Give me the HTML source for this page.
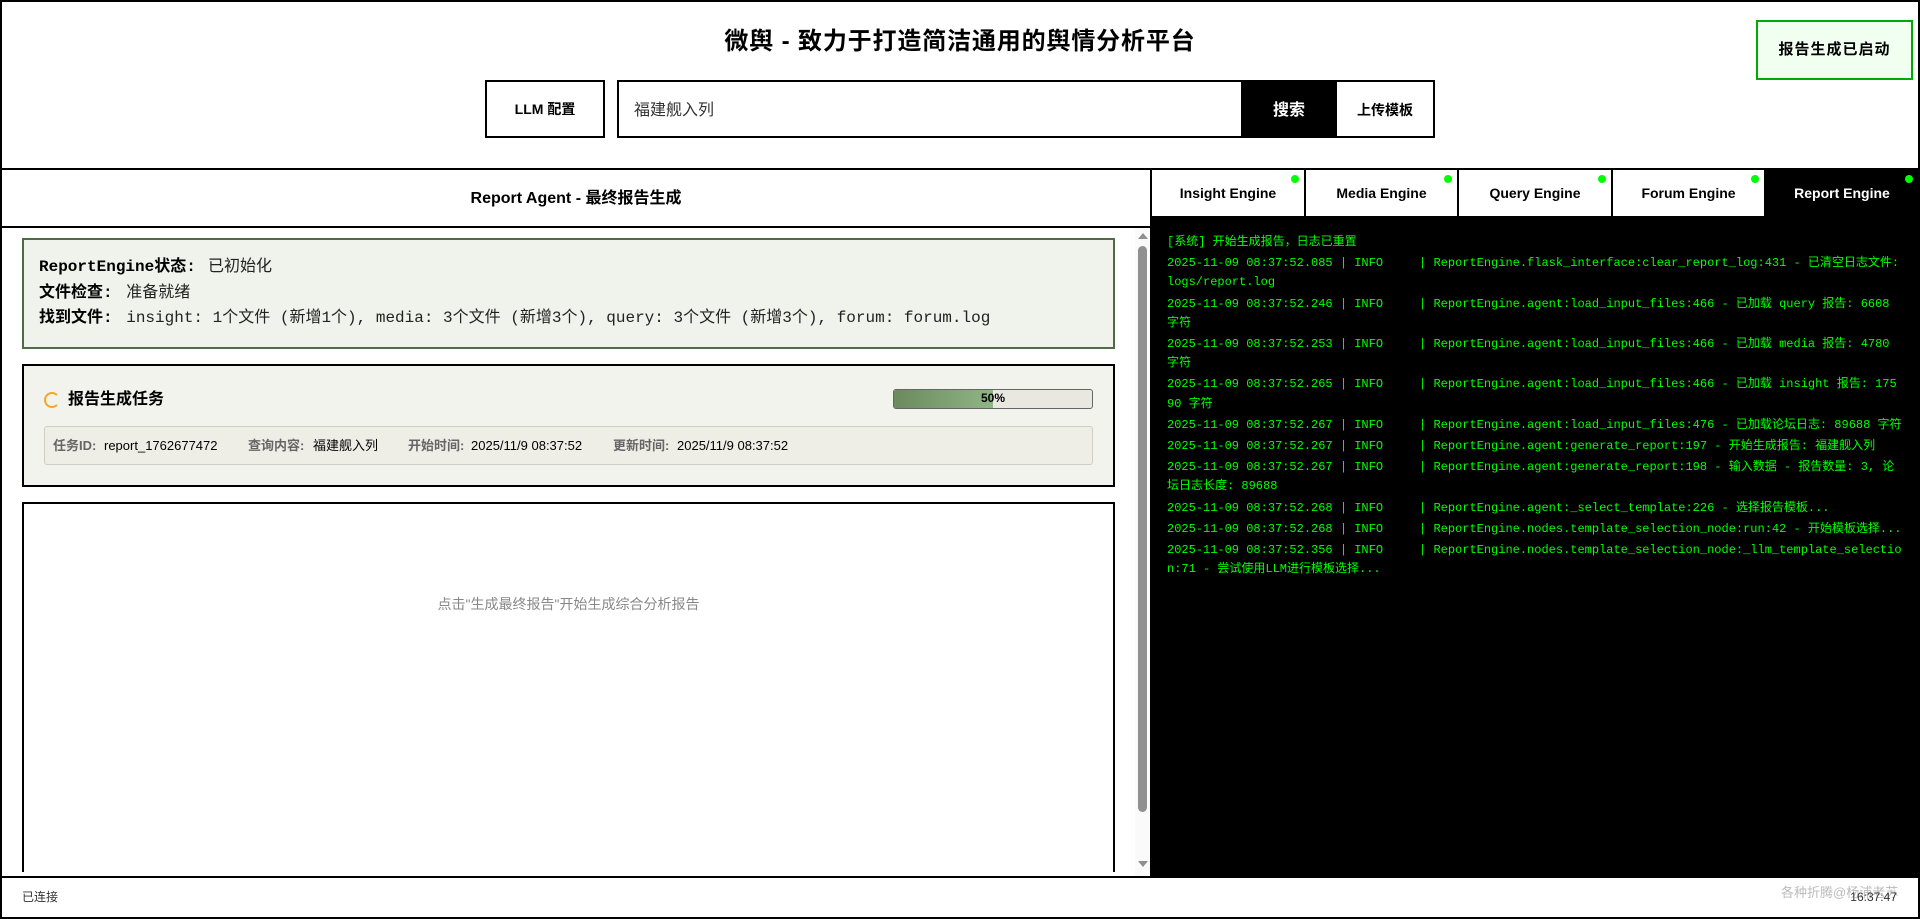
<!DOCTYPE html>
<html lang="zh-CN">
<head>
<meta charset="utf-8">
<title>微舆</title>
<style>
html,body{margin:0;padding:0;width:1920px;height:919px;overflow:hidden;background:#fff;color:#000;font-family:"Liberation Sans","Noto Sans CJK SC",sans-serif}
*{box-sizing:border-box}
.a{position:absolute;white-space:pre}
.b{position:absolute}
.c{text-align:center}
.mono{font-family:"Liberation Mono","Noto Sans CJK SC",monospace}
.tab{position:absolute;top:170px;height:46px;line-height:46px;text-align:center;font-size:14px;font-weight:bold;background:#fff;border-right:2px solid #000}
.tab i{position:absolute;top:5px;right:5px;width:8px;height:8px;border-radius:50%;background:#0f0}
.lab{position:absolute;top:426px;line-height:39px;font-size:13px;font-weight:bold;color:#666;white-space:pre}
.val{position:absolute;top:426px;line-height:39px;font-size:13px;color:#000;white-space:pre}
#log{position:absolute;left:1167px;top:233px;font:12px/19.2px "Liberation Mono","Noto Sans CJK SC",monospace;color:#0f0;white-space:pre}
#log div{margin-bottom:2px}
.v{color:#222}
</style>
</head>
<body>
<!-- frame -->
<div class="b" style="left:0;top:0;width:1920px;height:919px;border:2px solid #000"></div>

<!-- header -->
<div class="a c" style="left:0;top:24px;width:1920px;line-height:36px;font-size:24px;font-weight:bold;letter-spacing:.85px">微舆 - 致力于打造简洁通用的舆情分析平台</div>
<div class="a c" style="left:485px;top:80px;width:120px;height:58px;border:2px solid #000;line-height:55px;font-size:14px;font-weight:bold">LLM 配置</div>
<div class="b" style="left:617px;top:80px;width:818px;height:58px;border:2px solid #000"></div>
<div class="a" style="left:634px;top:84px;line-height:54px;font-size:16px;color:#333">福建舰入列</div>
<div class="a c" style="left:1241px;top:82px;width:96px;height:56px;background:#000;color:#fff;line-height:57px;font-size:16px;font-weight:bold">搜索</div>
<div class="b" style="left:1241px;top:80px;width:96px;height:2px;background:#000"></div>
<div class="a c" style="left:1337px;top:83px;width:96px;line-height:54px;font-size:14px;font-weight:bold">上传模板</div>
<div class="a c" style="left:1756px;top:20px;width:157px;height:60px;border:2px solid #00aa00;background:#f0fff0;line-height:56px;font-size:15px;font-weight:bold;letter-spacing:1px">报告生成已启动</div>
<div class="b" style="left:0;top:168px;width:1920px;height:2px;background:#000"></div>

<!-- left panel -->
<div class="a c" style="left:2px;top:171px;width:1148px;line-height:56px;font-size:16px;font-weight:bold">Report Agent - 最终报告生成</div>
<div class="b" style="left:0;top:226px;width:1150px;height:2px;background:#000"></div>

<!-- status box -->
<div class="b" style="left:22px;top:238px;width:1093px;height:111px;background:#eff3ec;border:2px solid #506b46"></div>
<div class="a mono" style="left:39px;top:255px;font-size:16px;line-height:25.6px;color:#000"><b>ReportEngine状态: </b><span class="v" style="margin-left:2.5px">已初始化</span>
<b>文件检查: </b><span class="v" style="margin-left:4px">准备就绪</span>
<b>找到文件: </b><span class="v" style="margin-left:4px">insight: 1个文件 (新增1个), media: 3个文件 (新增3个), query: 3个文件 (新增3个), forum: forum.log</span></div>

<!-- task box -->
<div class="b" style="left:22px;top:364px;width:1093px;height:123px;background:#f3f3ed;border:2px solid #000"></div>
<div class="b" style="left:44px;top:392px;width:16px;height:16px;border-radius:50%;border:2px solid #f5a623;border-right-color:transparent"></div>
<div class="a" style="left:68px;top:388px;line-height:24px;font-size:16px;font-weight:bold">报告生成任务</div>
<div class="b" style="left:893px;top:389px;width:200px;height:20px;border:1px solid #666;border-radius:3px;background:#e8e7e0;overflow:hidden">
  <div class="b" style="left:0;top:0;width:99px;height:18px;background:linear-gradient(90deg,#6b8a5e,#8fb585)"></div>
  <div class="a c" style="left:0;top:0;width:198px;line-height:17px;font-size:12px;font-weight:bold">50%</div>
</div>
<div class="b" style="left:44px;top:426px;width:1049px;height:39px;border:1px solid #cfcec3;border-radius:3px;background:#eeede6"></div>
<div class="lab" style="left:53px">任务ID:</div><div class="val" style="left:104px">report_1762677472</div>
<div class="lab" style="left:248px">查询内容:</div><div class="val" style="left:313px">福建舰入列</div>
<div class="lab" style="left:408px">开始时间:</div><div class="val" style="left:471px">2025/11/9 08:37:52</div>
<div class="lab" style="left:613px">更新时间:</div><div class="val" style="left:677px">2025/11/9 08:37:52</div>

<!-- report box -->
<div class="b" style="left:22px;top:502px;width:1093px;height:370px;border:2px solid #000;border-bottom:0"></div>
<div class="a c" style="left:24px;top:594px;width:1089px;line-height:20px;font-size:14px;color:#888">点击"生成最终报告"开始生成综合分析报告</div>

<!-- scrollbar -->
<div class="b" style="left:1135px;top:228px;width:15px;height:648px;background:#fafafa"></div>
<div class="b" style="left:1138px;top:233px;width:0;height:0;border-left:5px solid transparent;border-right:5px solid transparent;border-bottom:6px solid #909090"></div>
<div class="b" style="left:1138px;top:246px;width:9px;height:566px;border-radius:5px;background:#909090"></div>
<div class="b" style="left:1138px;top:861px;width:0;height:0;border-left:5px solid transparent;border-right:5px solid transparent;border-top:6px solid #909090"></div>

<!-- right panel -->
<div class="b" style="left:1150px;top:170px;width:768px;height:706px;background:#000"></div>
<div class="tab" style="left:1152px;width:154px">Insight Engine<i></i></div>
<div class="tab" style="left:1306px;width:153px">Media Engine<i></i></div>
<div class="tab" style="left:1459px;width:154px">Query Engine<i></i></div>
<div class="tab" style="left:1613px;width:153px">Forum Engine<i></i></div>
<div class="tab" style="left:1766px;width:152px;background:#000;color:#fff;border-right:0">Report Engine<i></i></div>

<div id="log"><div>[系统] 开始生成报告，日志已重置</div><div>2025-11-09 08:37:52.085 | INFO     | ReportEngine.flask_interface:clear_report_log:431 - 已清空日志文件:
logs/report.log</div><div>2025-11-09 08:37:52.246 | INFO     | ReportEngine.agent:load_input_files:466 - 已加载 query 报告: 6608
字符</div><div>2025-11-09 08:37:52.253 | INFO     | ReportEngine.agent:load_input_files:466 - 已加载 media 报告: 4780
字符</div><div>2025-11-09 08:37:52.265 | INFO     | ReportEngine.agent:load_input_files:466 - 已加载 insight 报告: 175
90 字符</div><div>2025-11-09 08:37:52.267 | INFO     | ReportEngine.agent:load_input_files:476 - 已加载论坛日志: 89688 字符</div><div>2025-11-09 08:37:52.267 | INFO     | ReportEngine.agent:generate_report:197 - 开始生成报告: 福建舰入列</div><div>2025-11-09 08:37:52.267 | INFO     | ReportEngine.agent:generate_report:198 - 输入数据 - 报告数量: 3, 论
坛日志长度: 89688</div><div>2025-11-09 08:37:52.268 | INFO     | ReportEngine.agent:_select_template:226 - 选择报告模板...</div><div>2025-11-09 08:37:52.268 | INFO     | ReportEngine.nodes.template_selection_node:run:42 - 开始模板选择...</div><div>2025-11-09 08:37:52.356 | INFO     | ReportEngine.nodes.template_selection_node:_llm_template_selectio
n:71 - 尝试使用LLM进行模板选择...</div></div>

<!-- status bar -->
<div class="b" style="left:0;top:876px;width:1920px;height:2px;background:#000"></div>
<div class="a" style="left:22px;top:888px;line-height:18px;font-size:12px;color:#333">已连接</div>
<div class="a" style="left:1781px;top:884px;line-height:18px;font-size:13px;color:#bbb">各种折腾@杨浦老苏</div>
<div class="a" style="right:23px;top:888px;line-height:18px;font-size:12px;color:#333">16:37:47</div>
</body>
</html>
